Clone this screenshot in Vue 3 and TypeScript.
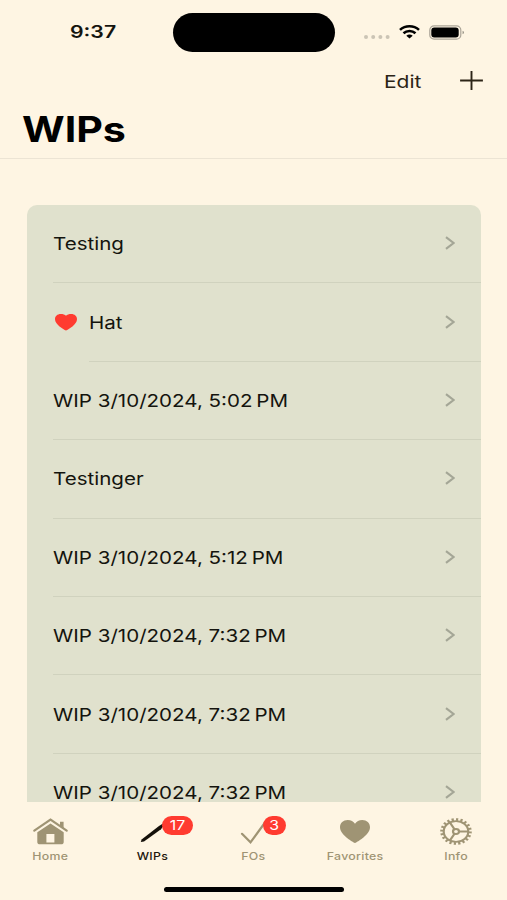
<script setup lang="ts">
interface Wip {
  name: string
  favorite?: boolean
}

interface Tab {
  id: 'home' | 'wips' | 'fos' | 'favorites' | 'info'
  label: string
  badge?: number
}

const wips: Wip[] = [
  { name: 'Testing' },
  { name: 'Hat', favorite: true },
  { name: 'WIP 3/10/2024, 5:02\u202fPM' },
  { name: 'Testinger' },
  { name: 'WIP 3/10/2024, 5:12\u202fPM' },
  { name: 'WIP 3/10/2024, 7:32\u202fPM' },
  { name: 'WIP 3/10/2024, 7:32\u202fPM' },
  { name: 'WIP 3/10/2024, 7:32\u202fPM' },
]

const tabs: Tab[] = [
  { id: 'home', label: 'Home' },
  { id: 'wips', label: 'WIPs', badge: 17 },
  { id: 'fos', label: 'FOs', badge: 3 },
  { id: 'favorites', label: 'Favorites' },
  { id: 'info', label: 'Info' },
]

const activeTab: Tab['id'] = 'wips'
</script>

<template>
  <div class="screen">
    <header class="header">
      <div class="status">
        <div class="clock"><span class="wide">9:37</span></div>
        <div class="island"></div>
        <div class="indicators">
          <svg class="dots" viewBox="0 0 26 4">
            <circle cx="2" cy="2" r="2" /><circle cx="9.2" cy="2" r="2" />
            <circle cx="16.4" cy="2" r="2" /><circle cx="23.6" cy="2" r="2" />
          </svg>
          <svg class="wifi" viewBox="0 0 21 14">
            <path d="M1 4.900C6.300.1 14.700.1 20 4.900" />
            <path d="M4.500 8.200c3.400-3 8.600-3 12 0" />
            <path class="base" d="M7.300 10.700c1.800-1.500 4.600-1.500 6.400 0L10.500 13.600Z" />
          </svg>
          <svg class="battery" viewBox="0 0 36 15">
            <rect class="shell" x=".8" y=".8" width="31" height="13.400" rx="4.300" />
            <rect x="2.300" y="2.600" width="27.400" height="9.800" rx="3" />
            <path class="cap" d="M33.600 5.700c1.800.6 1.800 3 0 3.600Z" />
          </svg>
        </div>
      </div>
      <div class="actions">
        <button class="edit"><span class="wide">Edit</span></button>
        <button class="add" aria-label="Add">
          <svg viewBox="0 0 24 20"><path d="M0 10h24M12 0v20" /></svg>
        </button>
      </div>
      <h1 class="title"><span class="wide">WIPs</span></h1>
    </header>

    <main class="content">
      <ul class="list">
        <li v-for="(wip, i) in wips" :key="i" class="row">
          <svg v-if="wip.favorite" class="heart" viewBox="0 0 30 24" preserveAspectRatio="none">
            <path d="M15 24C11.500 22.500 0 15 0 7.600 0 3.100 3.300 0 7.700 0c3.300 0 5.800.8 7.300 2.600 1.500-1.800 4-2.600 7.300-2.600C26.700 0 30 3.100 30 7.600 30 15 18.500 22.500 15 24Z" />
          </svg>
          <div class="cell">
            <span class="wide">{{ wip.name }}</span>
            <svg class="chevron" viewBox="0 0 10 14"><path d="M1 1.200 8.600 7 1 12.800" /></svg>
          </div>
        </li>
      </ul>
    </main>

    <nav class="tabs">
      <a v-for="tab in tabs" :key="tab.id" class="tab" :class="[tab.id, { active: tab.id === activeTab }]">
        <span class="icon">
          <svg v-if="tab.id === 'home'" width="35" height="27" viewBox="0 0 35 27">
            <path class="line" d="M1.300 12.600 17.500 1.500 33.700 12.600" />
            <path d="M27 3.800h3.600v7L27 8.300Z" />
            <path fill-rule="evenodd" d="M17.500 5.400 30.700 14.300V24q0 2.300-2.700 2.300H7q-2.700 0-2.700-2.300V14.300ZM13.400 16v8.500h8V16Z" />
          </svg>
          <svg v-else-if="tab.id === 'wips'" width="35" height="27" viewBox="0 0 35 27">
            <path class="needle" d="M5.800 24 6.600 21.400 24 8 28 5.500V8.500L26 11.200 9 23.600Z" />
          </svg>
          <svg v-else-if="tab.id === 'fos'" width="35" height="27" viewBox="0 0 35 27">
            <path class="line" d="M6 15.800 14.500 24.300 29 4.500" />
          </svg>
          <svg v-else-if="tab.id === 'favorites'" width="30" height="23" viewBox="0 0 30 24" preserveAspectRatio="none">
            <path d="M15 24C11.500 22.500 0 15 0 7.600 0 3.100 3.300 0 7.700 0c3.300 0 5.800 1.600 7.300 4 1.500-2.400 4-4 7.300-4C26.700 0 30 3.100 30 7.600 30 15 18.500 22.500 15 24Z" />
          </svg>
          <svg v-else width="32" height="27" viewBox="0 0 32 32" preserveAspectRatio="none">
            <circle class="teeth" cx="16" cy="16" r="14.200" pathLength="40" />
            <circle class="ring" cx="16" cy="16" r="12.300" />
            <circle class="ring" cx="16" cy="16" r="3" />
            <path class="ring" d="M19 16h9.300M14.500 13.400 9.900 5.400M14.500 18.600 9.900 26.600" />
          </svg>
          <span v-if="tab.badge" class="badge"><span class="wide">{{ tab.badge }}</span></span>
        </span>
        <span class="label"><span class="wide">{{ tab.label }}</span></span>
      </a>
    </nav>
    <div class="home-bar"></div>
  </div>
</template>

<style>
body {
  margin: 0;
  background: #fef5e3;
}
</style>

<style scoped>
.screen {
  box-sizing: border-box;
  display: flex;
  flex-direction: column;
  width: 507px;
  height: 900px;
  overflow: hidden;
  background: #fef5e3;
  color: #14140e;
  font-family: Inter, "Liberation Sans", sans-serif;
}

.screen svg {
  display: block;
  flex: none;
}

/* The interface uses an extended-width face. */
.wide {
  display: inline-block;
  white-space: nowrap;
  transform: scaleX(1.175);
  transform-origin: left center;
}

.header {
  box-sizing: border-box;
  flex: none;
  height: 159px;
  border-bottom: 1px solid #ece4d4;
}

.status {
  display: grid;
  grid-template-columns: 173px 162px 1fr;
  align-items: center;
  height: 39px;
  padding-top: 12.5px;
}

.clock {
  padding-left: 70px;
  font-size: 17px;
  font-weight: 600;
  line-height: 20px;
}

.clock .wide {
  transform: scaleX(1.25);
}

.island {
  height: 39px;
  border-radius: 20px;
  background: #000;
}

.indicators {
  display: flex;
  align-items: center;
  padding-left: 29px;
}

.dots {
  width: 26px;
  height: 4px;
  margin-top: 9px;
  fill: #cbc4b5;
}

.wifi {
  width: 21px;
  height: 14px;
  margin-left: 9px;
}

.wifi path {
  fill: none;
  stroke: #000;
  stroke-width: 2.6;
}

.wifi .base {
  fill: #000;
  stroke: none;
}

.battery {
  width: 36px;
  height: 15px;
  margin-left: 9px;
}

.battery .shell {
  fill: none;
  stroke: #aaa497;
  stroke-width: 1.2;
}

.battery .cap {
  fill: #8c877c;
}

.actions {
  display: flex;
  justify-content: flex-end;
  align-items: center;
  height: 30px;
  padding: 14px 24px 0 0;
}

.actions button {
  padding: 0;
  border: 0;
  background: none;
  color: #2c2416;
  font: inherit;
}

.edit {
  width: 76px;
  padding-top: 1px !important;
  text-align: left;
}

.edit .wide {
  font-size: 17.5px;
  transform: scaleX(1.2);
}

.add svg {
  width: 23px;
  height: 19px;
  overflow: visible;
  fill: none;
  stroke: #2c2416;
  stroke-width: 2;
}

.title {
  margin: 12px 0 0 22px;
  color: #000;
  font-size: 35px;
  font-weight: 700;
  line-height: 42px;
}

.content {
  box-sizing: border-box;
  flex: none;
  height: 642.5px;
  padding: 46px 26px 0 27px;
  overflow: hidden;
}

.list {
  margin: 0;
  padding: 0 0 0 25.5px;
  border-radius: 10px 10px 0 0;
  background: #e0e1cd;
  list-style: none;
}

.row {
  display: flex;
  align-items: center;
  height: 78.4px;
}

.heart {
  width: 22px;
  height: 16.5px;
  margin: 0 12px 0 2px;
  fill: #ff3b30;
}

.cell {
  box-sizing: border-box;
  display: flex;
  flex: 1;
  align-items: center;
  justify-content: space-between;
  height: 100%;
  padding: 0 26px 0 0;
  border-bottom: 1px solid #d0d2be;
  font-size: 17.5px;
}

.chevron {
  width: 10px;
  height: 14px;
  margin-top: -1px;
  fill: none;
  stroke: #a4a696;
  stroke-width: 2.2;
}

.tabs {
  display: grid;
  grid-template-columns: repeat(5, 1fr);
  flex: none;
  height: 85px;
}

.tab {
  display: flex;
  flex-direction: column;
  align-items: center;
  padding-top: 16px;
  color: #9f9474;
}

.tab.active {
  color: #1e180c;
}

.icon {
  position: relative;
  display: flex;
  align-items: center;
  justify-content: center;
  width: 35px;
  height: 27px;
}

.icon svg {
  fill: currentColor;
}

.icon .line {
  fill: none;
  stroke: currentColor;
  stroke-width: 2.2;
  stroke-linecap: round;
}

.icon .needle {
  fill: #14100a;
}

.icon .ring {
  fill: none;
  stroke: currentColor;
  stroke-width: 2.2;
}

.icon .teeth {
  fill: none;
  stroke: currentColor;
  stroke-width: 3.2;
  stroke-dasharray: 1 1;
}

.badge {
  position: absolute;
  top: -2px;
  left: 27px;
  display: flex;
  align-items: center;
  justify-content: center;
  min-width: 23px;
  height: 19px;
  border-radius: 10px;
  background: #ff3b30;
  color: #fff;
  font-size: 13.5px;
}

.wips .badge {
  min-width: 31px;
}

.badge .wide,
.label .wide {
  transform-origin: center;
}

.label {
  margin-top: 4px;
  font-size: 10.5px;
  font-weight: 500;
  letter-spacing: 0.25px;
  line-height: 15px;
}

.home-bar {
  flex: none;
  width: 180px;
  height: 5px;
  margin-left: 164px;
  border-radius: 3px;
  background: #000;
}
</style>
